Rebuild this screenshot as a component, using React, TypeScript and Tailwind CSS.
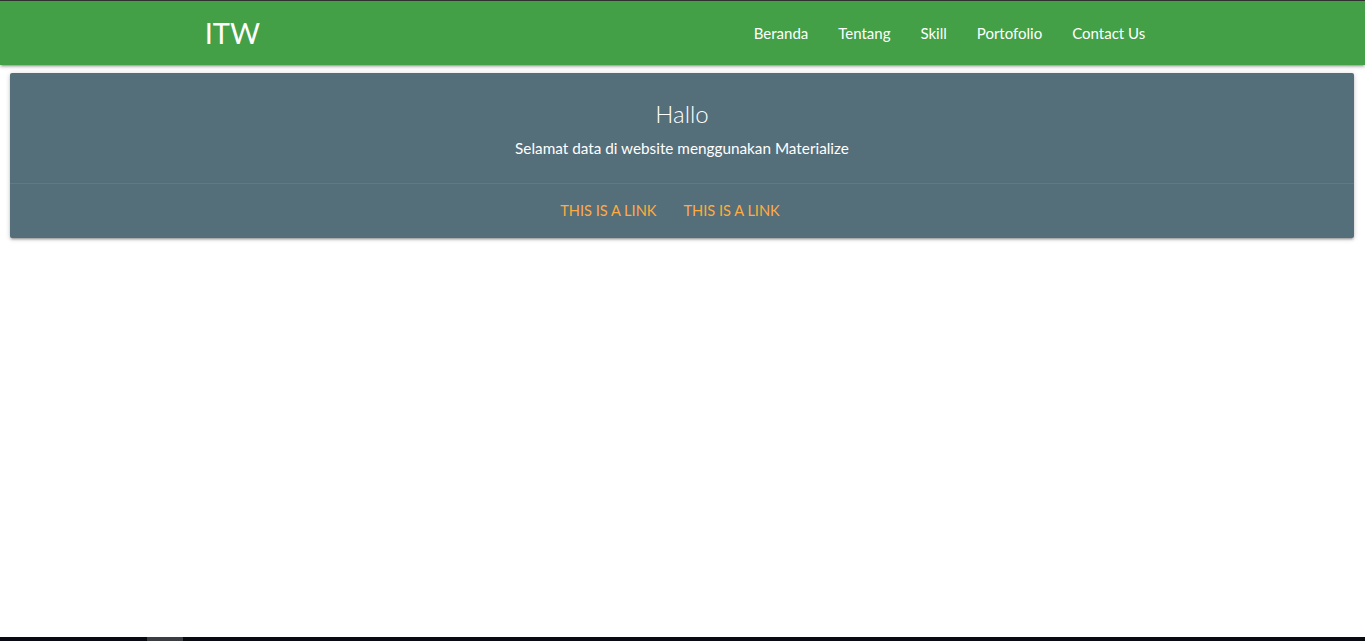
import React from "react";

export default function App() {
  const font = { fontFamily: 'Lato, "Open Sans", sans-serif' };
  return (
    <div className="flex h-[641px] flex-col bg-white" style={font}>
      <div className="h-[1px] bg-[#333333]" />
      <nav className="relative z-10 h-[64px] bg-[#43a047] shadow-[0_2px_2px_0_rgba(0,0,0,0.14),0_3px_1px_-2px_rgba(0,0,0,0.12),0_1px_5px_0_rgba(0,0,0,0.2)]">
        <div className="mx-auto flex h-full w-[70%] items-center justify-between">
          <a className="text-[29px] leading-[64px] text-white">ITW</a>
          <ul className="flex h-full items-center">
            {["Beranda", "Tentang", "Skill", "Portofolio", "Contact Us"].map((l) => (
              <li key={l}>
                <a className="px-[15px] text-[15px] leading-[64px] text-white">{l}</a>
              </li>
            ))}
          </ul>
        </div>
      </nav>
      <div className="ml-[10px] mr-[11px] mt-[8px] rounded-[2px] bg-[#546e7a] shadow-[0_2px_2px_0_rgba(0,0,0,0.14),0_3px_1px_-2px_rgba(0,0,0,0.12),0_1px_5px_0_rgba(0,0,0,0.2)]">
        <div className="p-[24px] text-center text-white">
          <div className="mb-[8px] pt-[2px] text-[24px] font-light leading-[30px]">Hallo</div>
          <p className="text-[15.3px] leading-[22px]">Selamat data di website menggunakan Materialize</p>
        </div>
        <div className="flex justify-center border-t border-[rgba(160,160,160,0.2)] px-[24px] pb-[16px] pt-[16px]">
          <a className="mr-[27px] text-[14.6px] uppercase leading-[22px] text-[#ffab40]">This is a link</a>
          <a className="mr-[24px] text-[14.6px] uppercase leading-[22px] text-[#ffab40]">This is a link</a>
        </div>
      </div>
      <div className="flex-1" />
      <div className="flex h-[4px] bg-[#070a12]">
        <div className="ml-[147px] w-[36px] bg-[#3a3d44]" />
      </div>
    </div>
  );
}
